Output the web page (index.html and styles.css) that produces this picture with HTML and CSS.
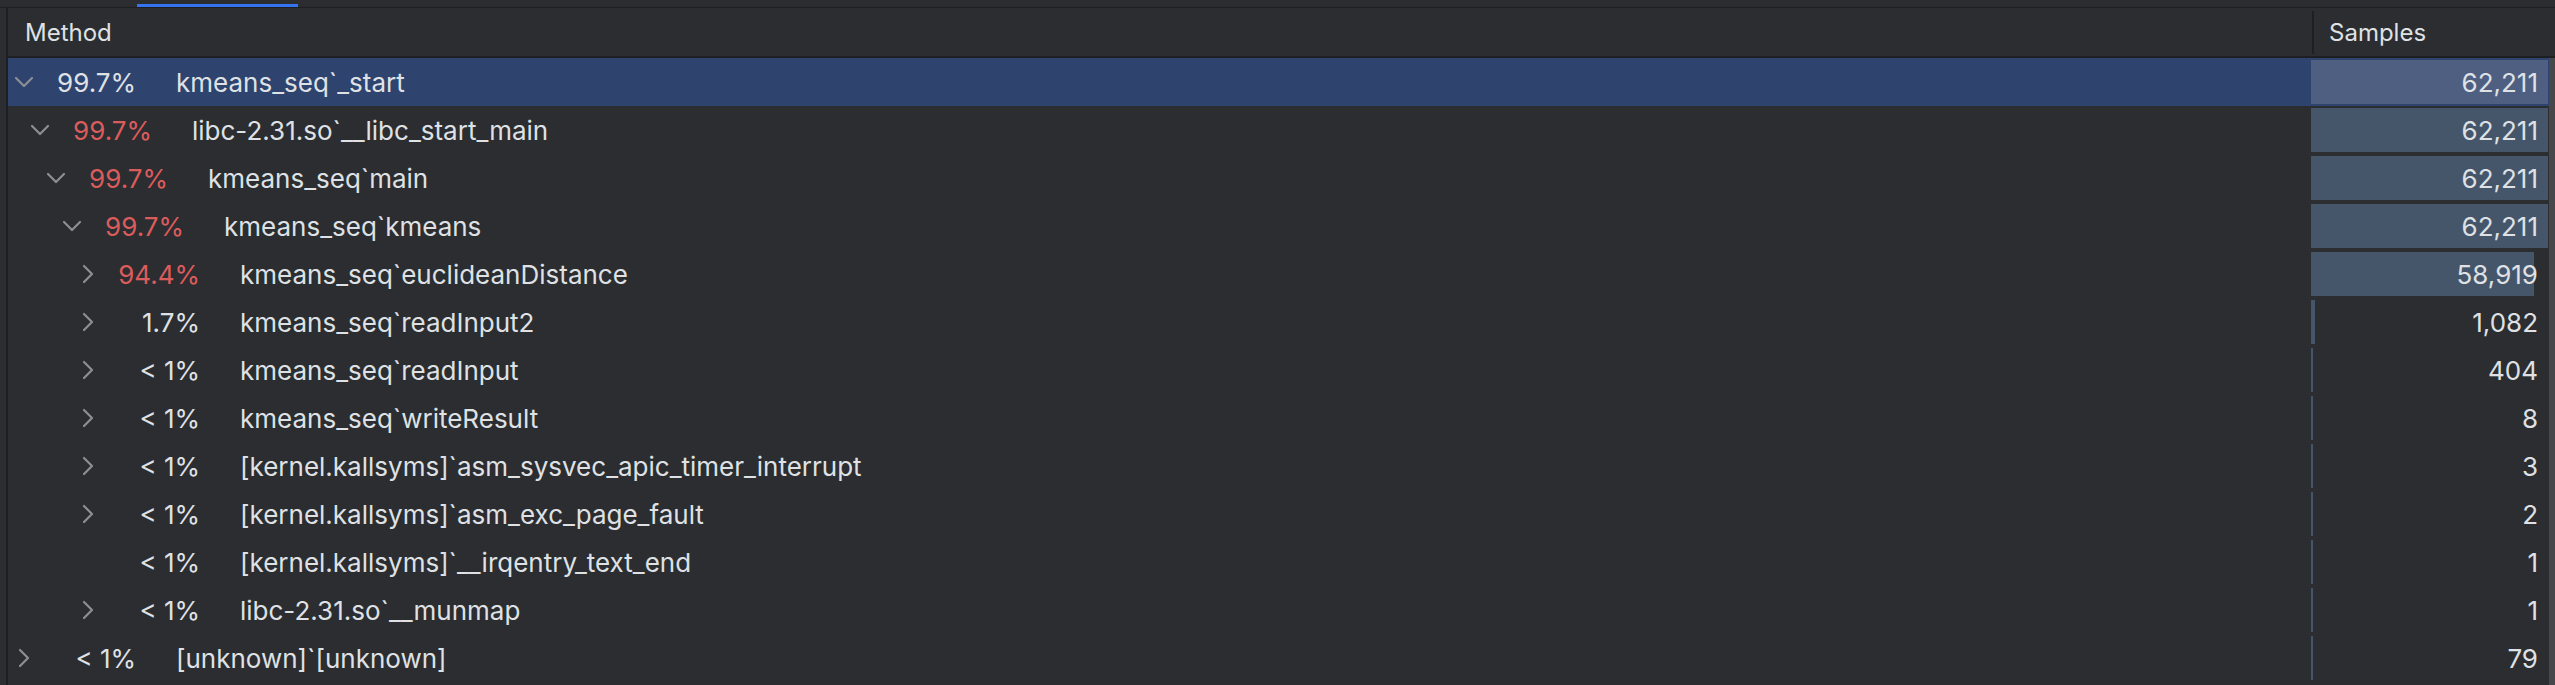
FILE: index.html
```html
<!DOCTYPE html>
<html>
<head>
<meta charset="utf-8">
<link rel="stylesheet" href="styles.css">
</head>
<body>
<div class="app">
  <div class="tabstrip"><div class="tab-indicator"></div></div>
  <div class="panel">
    <div class="gutter"></div>
    <div class="table">
      <div class="header">
        <div class="h-method">Method</div>
        <div class="h-samples"><div class="hsep"></div><span>Samples</span></div>
      </div>
      <div class="body">
        <div class="rows">
          <div class="row sel">
            <div class="cm lvl0"><span class="chev"><svg viewBox="0 0 16 16"><path d="M4 6 L8 10 L12 6"/></svg></span><span class="pct">99.7%</span><span class="name">kmeans_seq`_start</span></div>
            <div class="cs"><div class="bar" style="width:237px"></div><span class="num">62,211</span></div>
          </div>
          <div class="row">
            <div class="cm lvl1"><span class="chev"><svg viewBox="0 0 16 16"><path d="M4 6 L8 10 L12 6"/></svg></span><span class="pct hot">99.7%</span><span class="name">libc-2.31.so`__libc_start_main</span></div>
            <div class="cs"><div class="bar" style="width:237px"></div><span class="num">62,211</span></div>
          </div>
          <div class="row">
            <div class="cm lvl2"><span class="chev"><svg viewBox="0 0 16 16"><path d="M4 6 L8 10 L12 6"/></svg></span><span class="pct hot">99.7%</span><span class="name">kmeans_seq`main</span></div>
            <div class="cs"><div class="bar" style="width:237px"></div><span class="num">62,211</span></div>
          </div>
          <div class="row">
            <div class="cm lvl3"><span class="chev"><svg viewBox="0 0 16 16"><path d="M4 6 L8 10 L12 6"/></svg></span><span class="pct hot">99.7%</span><span class="name">kmeans_seq`kmeans</span></div>
            <div class="cs"><div class="bar" style="width:237px"></div><span class="num">62,211</span></div>
          </div>
          <div class="row">
            <div class="cm lvl4"><span class="chev"><svg viewBox="0 0 16 16"><path d="M6 4 L10 8 L6 12"/></svg></span><span class="pct hot">94.4%</span><span class="name">kmeans_seq`euclideanDistance</span></div>
            <div class="cs"><div class="bar" style="width:223px"></div><span class="num">58,919</span></div>
          </div>
          <div class="row">
            <div class="cm lvl4"><span class="chev"><svg viewBox="0 0 16 16"><path d="M6 4 L10 8 L6 12"/></svg></span><span class="pct">1.7%</span><span class="name">kmeans_seq`readInput2</span></div>
            <div class="cs"><div class="bar" style="width:4px"></div><span class="num">1,082</span></div>
          </div>
          <div class="row">
            <div class="cm lvl4"><span class="chev"><svg viewBox="0 0 16 16"><path d="M6 4 L10 8 L6 12"/></svg></span><span class="pct">&lt; 1%</span><span class="name">kmeans_seq`readInput</span></div>
            <div class="cs"><div class="bar" style="width:2px"></div><span class="num">404</span></div>
          </div>
          <div class="row">
            <div class="cm lvl4"><span class="chev"><svg viewBox="0 0 16 16"><path d="M6 4 L10 8 L6 12"/></svg></span><span class="pct">&lt; 1%</span><span class="name">kmeans_seq`writeResult</span></div>
            <div class="cs"><div class="bar" style="width:2px"></div><span class="num">8</span></div>
          </div>
          <div class="row">
            <div class="cm lvl4"><span class="chev"><svg viewBox="0 0 16 16"><path d="M6 4 L10 8 L6 12"/></svg></span><span class="pct">&lt; 1%</span><span class="name">[kernel.kallsyms]`asm_sysvec_apic_timer_interrupt</span></div>
            <div class="cs"><div class="bar" style="width:2px"></div><span class="num">3</span></div>
          </div>
          <div class="row">
            <div class="cm lvl4"><span class="chev"><svg viewBox="0 0 16 16"><path d="M6 4 L10 8 L6 12"/></svg></span><span class="pct">&lt; 1%</span><span class="name">[kernel.kallsyms]`asm_exc_page_fault</span></div>
            <div class="cs"><div class="bar" style="width:2px"></div><span class="num">2</span></div>
          </div>
          <div class="row">
            <div class="cm lvl4"><span class="chev"></span><span class="pct">&lt; 1%</span><span class="name">[kernel.kallsyms]`__irqentry_text_end</span></div>
            <div class="cs"><div class="bar" style="width:2px"></div><span class="num">1</span></div>
          </div>
          <div class="row">
            <div class="cm lvl4"><span class="chev"><svg viewBox="0 0 16 16"><path d="M6 4 L10 8 L6 12"/></svg></span><span class="pct">&lt; 1%</span><span class="name">libc-2.31.so`__munmap</span></div>
            <div class="cs"><div class="bar" style="width:2px"></div><span class="num">1</span></div>
          </div>
          <div class="row">
            <div class="cm lvl0"><span class="chev"><svg viewBox="0 0 16 16"><path d="M6 4 L10 8 L6 12"/></svg></span><span class="pct">&lt; 1%</span><span class="name">[unknown]`[unknown]</span></div>
            <div class="cs"><div class="bar" style="width:2px"></div><span class="num">79</span></div>
          </div>
        </div>
        <div class="scrollbar"></div>
      </div>
    </div>
  </div>
</div>
</body>
</html>
```

FILE: styles.css
```css
* { box-sizing: border-box; }
html, body { margin: 0; padding: 0; background: #2b2d30; }
body {
  width: 2555px;
  height: 685px;
  overflow: hidden;
  font-family: Inter, "Noto Sans", sans-serif;
  font-size: 26px;
  color: #dfe1e5;
}
.app { display: flex; flex-direction: column; height: 685px; }
.tabstrip {
  height: 8px;
  border-bottom: 1px solid #1e1f22;
  display: flex;
  align-items: flex-end;
  padding-left: 137px;
}
.tab-indicator { width: 161px; height: 3px; background: #3574f0; }
.panel { display: flex; flex: 1; min-height: 0; }
.gutter {
  width: 8px;
  border-right: 2px solid #1e1f22;
  background: #2b2d30;
}
.table { flex: 1; display: flex; flex-direction: column; min-width: 0; }
.header {
  height: 50px;
  display: flex;
  border-bottom: 2px solid #1e1f22;
}
.h-method {
  width: 2303px;
  padding-left: 17px;
  display: flex;
  align-items: center;
  font-size: 24px;
}
.h-samples {
  flex: 1;
  display: flex;
  align-items: center;
  font-size: 24px;
}
.hsep { width: 2px; height: 43px; background: #1e1f22; margin-left: 1px; margin-right: 15px; }
.body { display: flex; flex: 1; min-height: 0; }
.rows { width: 2541px; display: flex; flex-direction: column; }
.scrollbar { width: 6px; background: #47484b; }
.row { height: 48px; display: flex; flex: none; }
.row.sel { background: #2e436e; }
.cm { width: 2303px; display: flex; align-items: center; white-space: nowrap; }
.lvl0 { padding-left: 0; }
.lvl1 { padding-left: 16px; }
.lvl2 { padding-left: 32px; }
.lvl3 { padding-left: 48px; }
.lvl4 { padding-left: 64px; }
.chev { width: 32px; height: 32px; display: flex; flex: none; }
.chev svg { width: 32px; height: 32px; fill: none; stroke: #8c8f96; stroke-width: 1.1; stroke-linecap: round; stroke-linejoin: round; }
.pct { width: 96px; text-align: right; flex: none; }
.pct.hot { color: #db5c5c; }
.name { margin-left: 40px; }
.cs { flex: 1; display: grid; }
.bar { grid-area: 1 / 1; justify-self: start; margin: 2px 0; background: #45566a; }
.sel .bar { background: #4e5f82; }
.num { grid-area: 1 / 1; justify-self: end; align-self: center; padding-right: 11px; }
```
